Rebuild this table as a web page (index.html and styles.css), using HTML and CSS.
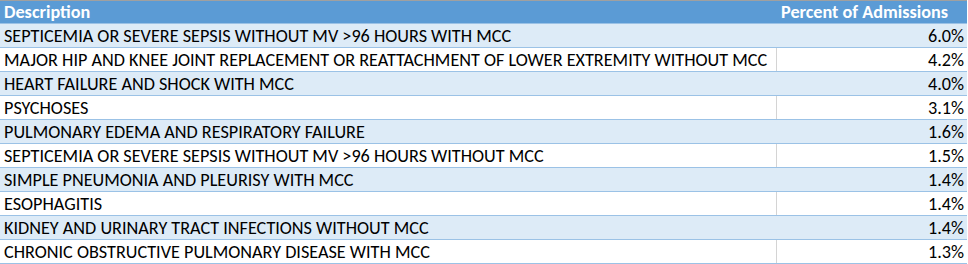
FILE: index.html
```html
<!DOCTYPE html>
<html>
<head>
<meta charset="utf-8">
<link rel="stylesheet" href="styles.css">
</head>
<body>
<div class="table">
  <div class="row head"><div class="c1">Description</div><div class="c2">Percent of Admissions</div></div>
  <div class="row band"><div class="c1">SEPTICEMIA OR SEVERE SEPSIS WITHOUT MV &gt;96 HOURS WITH MCC</div><div class="c2 num">6.0%</div></div>
  <div class="row"><div class="c1">MAJOR HIP AND KNEE JOINT REPLACEMENT OR REATTACHMENT OF LOWER EXTREMITY WITHOUT MCC</div><div class="c2 num">4.2%</div></div>
  <div class="row band"><div class="c1">HEART FAILURE AND SHOCK WITH MCC</div><div class="c2 num">4.0%</div></div>
  <div class="row"><div class="c1">PSYCHOSES</div><div class="c2 num">3.1%</div></div>
  <div class="row band"><div class="c1">PULMONARY EDEMA AND RESPIRATORY FAILURE</div><div class="c2 num">1.6%</div></div>
  <div class="row"><div class="c1">SEPTICEMIA OR SEVERE SEPSIS WITHOUT MV &gt;96 HOURS WITHOUT MCC</div><div class="c2 num">1.5%</div></div>
  <div class="row band"><div class="c1">SIMPLE PNEUMONIA AND PLEURISY WITH MCC</div><div class="c2 num">1.4%</div></div>
  <div class="row"><div class="c1">ESOPHAGITIS</div><div class="c2 num">1.4%</div></div>
  <div class="row band"><div class="c1">KIDNEY AND URINARY TRACT INFECTIONS WITHOUT MCC</div><div class="c2 num">1.4%</div></div>
  <div class="row"><div class="c1">CHRONIC OBSTRUCTIVE PULMONARY DISEASE WITH MCC</div><div class="c2 num">1.3%</div></div>
</div>
</body>
</html>
```
FILE: styles.css
```css
html, body {
  margin: 0;
  padding: 0;
  background: #ffffff;
}
body {
  font-family: Carlito, Lato, "Liberation Sans", sans-serif;
  font-size: 18.2px;
  color: #000000;
}
.table {
  width: 967px;
  border-top: 1px solid #a0a0a0;
}
.row {
  display: grid;
  grid-template-columns: 776px 190px;
  height: 23px;
  border-bottom: 1px solid #9bc2e6;
  background: #ffffff;
}
.row.band {
  background: #ddebf7;
}
.row.head {
  height: 22px;
  background: #5b9bd5;
  color: #ffffff;
  font-weight: bold;
}
.c1, .c2 {
  padding: 2px 3px 0 4px;
  white-space: nowrap;
  overflow: hidden;
  line-height: 21px;
}
.row.head .c1, .row.head .c2 {
  padding-top: 1px;
}
.row:not(.band):not(.head) .c2 {
  border-left: 1px solid #d4d4d4;
}
.row.head .c2, .row.band .c2 {
  border-left: 1px solid transparent;
}
.num {
  text-align: right;
  padding-right: 2px;
}
```
